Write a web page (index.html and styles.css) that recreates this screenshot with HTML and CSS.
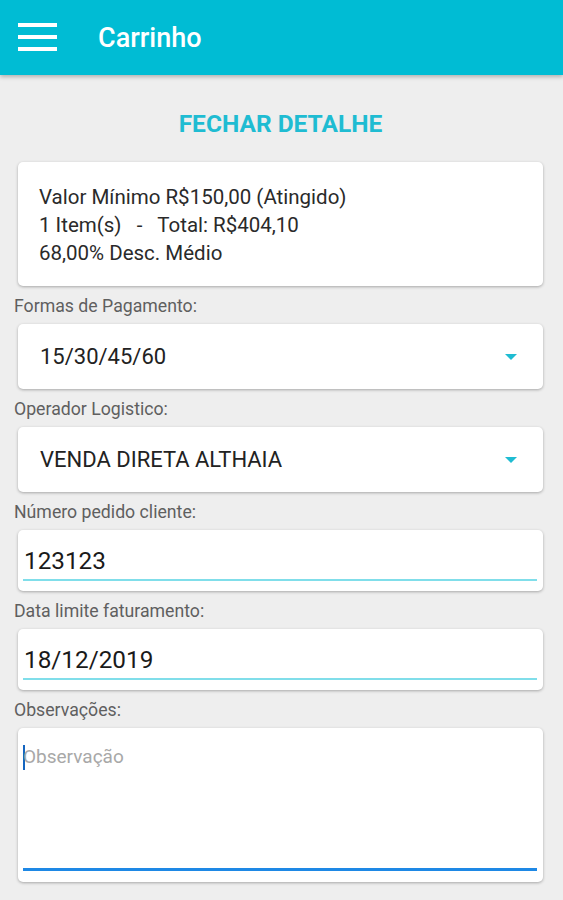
FILE: index.html
```html
<!DOCTYPE html>
<html>
<head>
    <title>Carrinho</title>
    <link rel="stylesheet" href="styles.css">
</head>
<body>

    <header class="topbar">
        <div class="menu-icon">
            <span></span>
            <span></span>
            <span></span>
        </div>
        <h1>Carrinho</h1>
    </header>

    <main class="content">
        <div class="close-btn">FECHAR DETALHE</div>

        <div class="card summary">
            <p>Valor Mínimo R$150,00 (Atingido)</p>
            <p>1 Item(s) &nbsp; - &nbsp; Total: R$404,10</p>
            <p>68,00% Desc. Médio</p>
        </div>

        <label class="field-label">Formas de Pagamento:</label>
        <div class="card select">
            <span>15/30/45/60</span>
            <span class="arrow"></span>
        </div>

        <label class="field-label">Operador Logistico:</label>
        <div class="card select">
            <span>VENDA DIRETA ALTHAIA</span>
            <span class="arrow"></span>
        </div>

        <label class="field-label">Número pedido cliente:</label>
        <div class="card input">
            <div class="input-text">123123</div>
            <div class="underline"></div>
        </div>

        <label class="field-label">Data limite faturamento:</label>
        <div class="card input">
            <div class="input-text">18/12/2019</div>
            <div class="underline"></div>
        </div>

        <label class="field-label">Observações:</label>
        <div class="card textarea">
            <div class="placeholder"><span class="cursor"></span>Observação</div>
            <div class="underline focused"></div>
        </div>
    </main>

</body>
</html>
```

FILE: styles.css
```css
body {
    margin: 0;
    font-family: Roboto, "Noto Sans", Arial, sans-serif;
    background-color: #eeeeee;
    color: #222;
}

.topbar {
    background-color: #00bcd4;
    height: 75px;
    display: flex;
    align-items: center;
    box-shadow: 0 2px 4px rgba(0, 0, 0, 0.25);
}

.menu-icon {
    width: 39px;
    margin-left: 18px;
    display: flex;
    flex-direction: column;
    gap: 8px;
    margin-top: -2px;
}

.menu-icon span {
    display: block;
    height: 4px;
    background: white;
}

.topbar h1 {
    margin: 0 0 0 41px;
    color: white;
    font-size: 27px;
    font-weight: 500;
}

.content {
    padding: 0 20px 20px 14px;
}

.close-btn {
    text-align: center;
    padding: 36px 0 25px;
    line-height: 26px;
    font-size: 24.5px;
    font-weight: bold;
    color: #1fbcd2;
    margin-left: 4px;
}

.card {
    background: white;
    border-radius: 5px;
    margin-left: 4px;
    box-shadow: 0 1px 3px rgba(0, 0, 0, 0.3);
}

.summary {
    padding: 21px 21px 19px;
    height: 84px;
}

.summary p {
    margin: 0;
    line-height: 28px;
    font-size: 20.5px;
    color: #2a2a2a;
}

.field-label {
    display: block;
    margin: 10px 0 8px;
    line-height: 20px;
    font-size: 17.7px;
    color: #5f5f5f;
}

.select {
    display: flex;
    justify-content: space-between;
    align-items: center;
    height: 65px;
    padding: 0 26px 0 22px;
    font-size: 22px;
    color: #222;
}

.arrow {
    width: 0;
    height: 0;
    border-left: 6px solid transparent;
    border-right: 6px solid transparent;
    border-top: 6px solid #1fbcd2;
}

.input {
    padding: 18px 6px 10px 5px;
}

.input-text {
    line-height: 26px;
    font-size: 24.3px;
    padding-left: 1px;
    color: #1a1a1a;
}

.underline {
    height: 2px;
    margin-top: 5px;
    background: #80deea;
}

.textarea {
    height: 154px;
    padding: 0 6px 0 5px;
    display: flex;
    flex-direction: column;
    justify-content: space-between;
    box-sizing: border-box;
}

.placeholder {
    margin-top: 16px;
    line-height: 26px;
    font-size: 19px;
    color: #a8a8a8;
    display: flex;
    align-items: center;
}

.cursor {
    display: inline-block;
    width: 2px;
    height: 25px;
    background: #1565c0;
    margin-right: -2px;
}

.underline.focused {
    height: 3px;
    margin: 0 0 11px;
    background: #1e88e5;
}
```
